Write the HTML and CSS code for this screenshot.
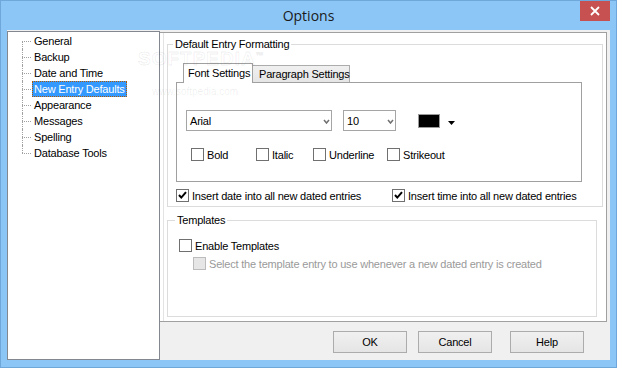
FILE: index.html
```html
<!DOCTYPE html>
<html lang="en">
<head>
  <meta charset="UTF-8" />
  <title>Options</title>
  <link rel="stylesheet" href="styles.css">
</head>
<body>

  <div class="window">
    <!-- Title bar -->
    <div class="titlebar">
      <span class="title">Options</span>
      <button class="close" aria-label="Close">
        <svg width="10" height="10" viewBox="0 0 10 10"><path d="M1 1 L9 9 M9 1 L1 9" stroke="#fff" stroke-width="1.8" fill="none"/></svg>
      </button>
    </div>

    <div class="watermark">SOFTPEDIA<sup>™</sup><span>www.softpedia.com</span></div>

    <div class="client">
      <!-- Category tree -->
      <ul class="tree">
        <li><span>General</span></li>
        <li><span>Backup</span></li>
        <li><span>Date and Time</span></li>
        <li class="selected"><span>New Entry Defaults</span></li>
        <li><span>Appearance</span></li>
        <li><span>Messages</span></li>
        <li><span>Spelling</span></li>
        <li><span>Database Tools</span></li>
      </ul>

      <div class="side">
        <div class="panel">
          <fieldset class="group group-format">
            <legend>Default Entry Formatting</legend>

            <div class="tabs">
              <div class="tab active">Font Settings</div>
              <div class="tab">Paragraph Settings</div>
            </div>

            <div class="tab-page">
              <div class="font-row">
                <div class="combo combo-font">
                  <span>Arial</span>
                  <svg width="7" height="5" viewBox="0 0 7 5"><path d="M1 1 L3.5 4 L6 1" stroke="#707070" stroke-width="1.5" fill="none"/></svg>
                </div>
                <div class="combo combo-size">
                  <span>10</span>
                  <svg width="7" height="5" viewBox="0 0 7 5"><path d="M1 1 L3.5 4 L6 1" stroke="#707070" stroke-width="1.5" fill="none"/></svg>
                </div>
                <div class="swatch"></div>
                <svg class="swatch-arrow" width="7" height="4" viewBox="0 0 7 4"><path d="M0 0 H7 L3.5 4 Z" fill="#000"/></svg>
              </div>

              <div class="style-row">
                <label class="check w-bold"><span class="box"></span>Bold</label>
                <label class="check w-italic"><span class="box"></span>Italic</label>
                <label class="check w-underline"><span class="box"></span>Underline</label>
                <label class="check"><span class="box"></span>Strikeout</label>
              </div>
            </div>

            <div class="insert-row">
              <label class="check w-date">
                <span class="box"><svg width="11" height="11" viewBox="0 0 11 11"><path d="M2 5 L4.3 7.6 L9 2.2" stroke="#000" stroke-width="2" fill="none"/></svg></span>
                Insert date into all new dated entries
              </label>
              <label class="check">
                <span class="box"><svg width="11" height="11" viewBox="0 0 11 11"><path d="M2 5 L4.3 7.6 L9 2.2" stroke="#000" stroke-width="2" fill="none"/></svg></span>
                Insert time into all new dated entries
              </label>
            </div>
          </fieldset>

          <fieldset class="group group-templates">
            <legend>Templates</legend>
            <label class="check enable"><span class="box"></span>Enable Templates</label>
            <label class="check disabled"><span class="box"></span>Select the template entry to use whenever a new dated entry is created</label>
          </fieldset>
        </div>

        <div class="buttons">
          <button class="btn">OK</button>
          <button class="btn btn-cancel">Cancel</button>
          <button class="btn btn-help">Help</button>
        </div>
      </div>
    </div>
  </div>

</body>
</html>
```

FILE: styles.css
```css
* {
  margin: 0;
  padding: 0;
  box-sizing: border-box;
}

html, body {
  width: 617px;
  height: 368px;
  overflow: hidden;
}

body {
  background: #8cc6f7;
  font-family: "Liberation Sans", Arial, sans-serif;
  font-size: 11px;
  letter-spacing: -0.2px;
  color: #000;
}

.window {
  position: relative;
  height: 368px;
  border: 1px solid #6fa7da;
  padding: 0 6px 7px 6px;
  display: flex;
  flex-direction: column;
}

/* title bar */
.titlebar {
  height: 29px;
  display: grid;
  grid-template-columns: 1fr auto 1fr;
}

.title {
  grid-column: 2;
  font-family: "Open Sans", sans-serif;
  font-size: 14px;
  letter-spacing: 0;
  line-height: 29px;
  color: #1a1a1a;
}

.close {
  grid-column: 3;
  justify-self: end;
  width: 30px;
  height: 20px;
  border: none;
  background: #c75050;
  display: flex;
  align-items: center;
  justify-content: center;
}

.watermark {
  position: absolute;
  left: 137px;
  top: 47px;
  font-size: 19px;
  font-weight: bold;
  letter-spacing: 1px;
  color: transparent;
  -webkit-text-stroke: 1px rgba(0, 0, 0, 0.07);
  pointer-events: none;
  z-index: 5;
}

.watermark sup {
  font-size: 8px;
}

.watermark span {
  display: block;
  font-size: 10px;
  font-weight: normal;
  letter-spacing: 0;
  margin: 16px 0 0 14px;
  -webkit-text-stroke: 0;
  color: rgba(0, 0, 0, 0.08);
}

.client {
  flex: 1;
  display: flex;
  background: #f0f0f0;
}

/* tree */
.tree {
  width: 153px;
  margin-top: 1px;
  background: #fff;
  border: 1px solid #828790;
  list-style: none;
  padding: 1px 0 0 14px;
}

.tree li {
  position: relative;
  height: 16px;
  padding-left: 10px;
}

.tree li::before {
  content: "";
  position: absolute;
  left: 0;
  top: 0;
  bottom: 0;
  border-left: 1px dotted #a0a0a0;
}

.tree li:first-child::before {
  top: 8px;
}

.tree li:last-child::before {
  bottom: 8px;
}

.tree li::after {
  content: "";
  position: absolute;
  left: 0;
  top: 8px;
  width: 9px;
  border-top: 1px dotted #a0a0a0;
}

.tree span {
  display: inline-block;
  height: 16px;
  line-height: 14px;
  padding: 0 1px;
  border: 1px solid transparent;
}

.tree .selected span {
  background: #3399ff;
  color: #fff;
  border: 1px dotted #b35900;
}

/* right side */
.side {
  flex: 1;
  display: flex;
  flex-direction: column;
}

.panel {
  height: 290px;
  margin: 2px 3px 0 0;
  background: #fff;
  border: 1px solid #a0a0a0;
  border-left: none;
  box-shadow: inset 3px 0 0 #fff, inset 4px 0 0 #e3e3e3;
  padding: 5px 0 0 7px;
  display: flex;
  flex-direction: column;
}

.group {
  border: 1px solid #dcdcdc;
  min-inline-size: 0;
}

.group legend {
  line-height: 13px;
  padding: 0 2px;
}

.group-format {
  margin-right: 3px;
  padding-bottom: 4px;
}

.group-format legend {
  margin-left: 5px;
}

.group-templates {
  flex: 1;
  margin: 7px 9px 4px 0;
}

.group-templates legend {
  margin-left: 7px;
}

/* tabs */
.tabs {
  display: flex;
  align-items: flex-end;
  height: 19px;
  margin: 12px 0 0 8px;
  padding-left: 7px;
}

.tab {
  width: 98px;
  height: 17px;
  line-height: 16px;
  padding-left: 6px;
  border: 1px solid #acacac;
  border-bottom: none;
  background: linear-gradient(#f0f0f0, #e5e5e5);
  white-space: nowrap;
}

.tab.active {
  position: relative;
  z-index: 1;
  width: 70px;
  height: 20px;
  margin-bottom: -1px;
  margin-right: -1px;
  line-height: 19px;
  padding-left: 4px;
  background: #fff;
  border-color: #a0a0a0;
}

.tab-page {
  height: 100px;
  margin: 0 20px 0 8px;
  border: 1px solid #a0a0a0;
  padding: 27px 0 0 9px;
}

.font-row {
  display: flex;
  align-items: center;
  height: 21px;
}

.combo {
  height: 21px;
  border: 1px solid #a5a5a5;
  background: #fff;
  display: flex;
  align-items: center;
  justify-content: space-between;
  padding: 1px 1px 0 3px;
}

.combo-font {
  width: 146px;
}

.combo-size {
  width: 53px;
  margin-left: 11px;
}

.swatch {
  width: 22px;
  height: 14px;
  margin-left: 22px;
  background: #000;
  border: 1px solid #9a9a9a;
}

.swatch-arrow {
  margin: 5px 0 0 8px;
}

.style-row {
  display: flex;
  margin-top: 17px;
  padding-left: 5px;
}

/* checkboxes */
.check {
  display: flex;
  align-items: center;
  gap: 3px;
  height: 13px;
  white-space: nowrap;
}

.box {
  width: 13px;
  height: 13px;
  border: 1px solid #707070;
  background: #fff;
  display: flex;
  flex-shrink: 0;
}

.w-bold { width: 65px; }
.w-italic { width: 57px; }
.w-underline { width: 74px; }
.w-date { width: 216px; }

.insert-row {
  display: flex;
  margin-top: 7px;
  padding-left: 8px;
}

.enable {
  margin: 12px 0 0 11px;
}

.disabled {
  margin: 5px 0 0 25px;
  color: #9a9a9a;
}

.disabled .box {
  background: #e6e6e6;
  border-color: #bcbcbc;
}

/* dialog buttons */
.buttons {
  display: flex;
  justify-content: flex-end;
  margin-top: 9px;
  padding-right: 26px;
}

.btn {
  width: 74px;
  height: 22px;
  border: 1px solid #acacac;
  background: linear-gradient(#f0f0f0, #e5e5e5);
  font-family: "Liberation Sans", Arial, sans-serif;
  font-size: 11px;
  letter-spacing: -0.2px;
  color: #000;
}

.btn-cancel { margin-left: 11px; }
.btn-help { margin-left: 18px; }
```
